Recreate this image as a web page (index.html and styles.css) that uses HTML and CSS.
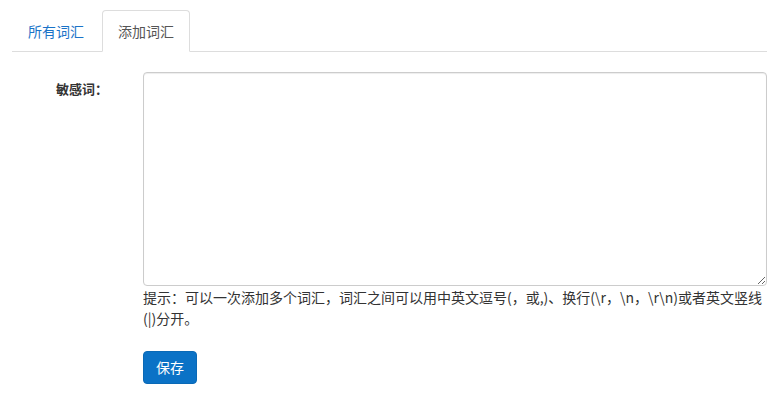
FILE: index.html
```html
<!DOCTYPE html>
<html lang="zh-CN">

<head>
    <meta charset="UTF-8">
    <meta name="viewport" content="width=device-width, initial-scale=1.0">
    <title>敏感词管理</title>
    <link rel="stylesheet" href="styles.css">
</head>

<body>

    <div class="page">
        <!-- Tabs -->
        <ul class="nav-tabs">
            <li><a href="#">所有词汇</a></li>
            <li class="active"><a href="#">添加词汇</a></li>
        </ul>

        <!-- Add word form -->
        <form class="word-form" onsubmit="return false;">
            <label class="form-label" for="words">敏感词：</label>
            <div class="form-field">
                <textarea id="words" class="form-control"></textarea>
                <p class="help-block">提示：可以一次添加多个词汇，词汇之间可以用中英文逗号(，或,)、换行(\r，\n，\r\n)或者英文竖线(|)分开。</p>
            </div>

            <div class="form-field form-actions">
                <button class="btn-primary" type="submit">保存</button>
            </div>
        </form>
    </div>

</body>

</html>
```

FILE: styles.css
```css
/* General body styling */
body,
html {
    margin: 0;
    padding: 0;
    background-color: #fff;
    color: #333;
    font-family: "Noto Sans CJK SC", "Noto Sans", sans-serif;
    font-size: 14px;
}

.page {
    padding: 10px 8px 0 12px;
}

/* Tabs */
.nav-tabs {
    display: flex;
    margin: 0;
    padding: 0;
    list-style: none;
    border-bottom: 1px solid #ddd;
}

.nav-tabs li {
    margin-bottom: -1px;
}

.nav-tabs a {
    display: block;
    margin-right: 2px;
    padding: 10px 15px;
    line-height: 20px;
    font-size: 14px;
    color: #1a73c8;
    text-decoration: none;
    border: 1px solid transparent;
    border-radius: 4px 4px 0 0;
}

.nav-tabs .active a {
    color: #555;
    background-color: #fff;
    border-color: #ddd #ddd transparent;
}

/* Form */
.word-form {
    display: grid;
    grid-template-columns: 96px 1fr;
    column-gap: 35px;
    padding-top: 20px;
}

.form-label {
    padding-top: 7px;
    text-align: right;
    font-size: 13px;
    font-weight: bold;
    line-height: 20px;
}

.form-control {
    display: block;
    box-sizing: border-box;
    width: 100%;
    height: 214px;
    padding: 6px 12px;
    border: 1px solid #ccc;
    border-radius: 4px;
    box-shadow: inset 0 1px 1px rgba(0, 0, 0, 0.075);
    font-family: inherit;
    font-size: 14px;
    resize: vertical;
}

.help-block {
    margin: 1px 0 0;
    line-height: 21px;
    color: #333;
}

.form-actions {
    grid-column: 2;
    padding-top: 22px;
}

.btn-primary {
    padding: 6px 12px;
    font-family: inherit;
    font-size: 14px;
    line-height: 19px;
    color: #fff;
    background-color: #0b72c6;
    border: 1px solid #0a69b6;
    border-radius: 4px;
    cursor: pointer;
}
```
